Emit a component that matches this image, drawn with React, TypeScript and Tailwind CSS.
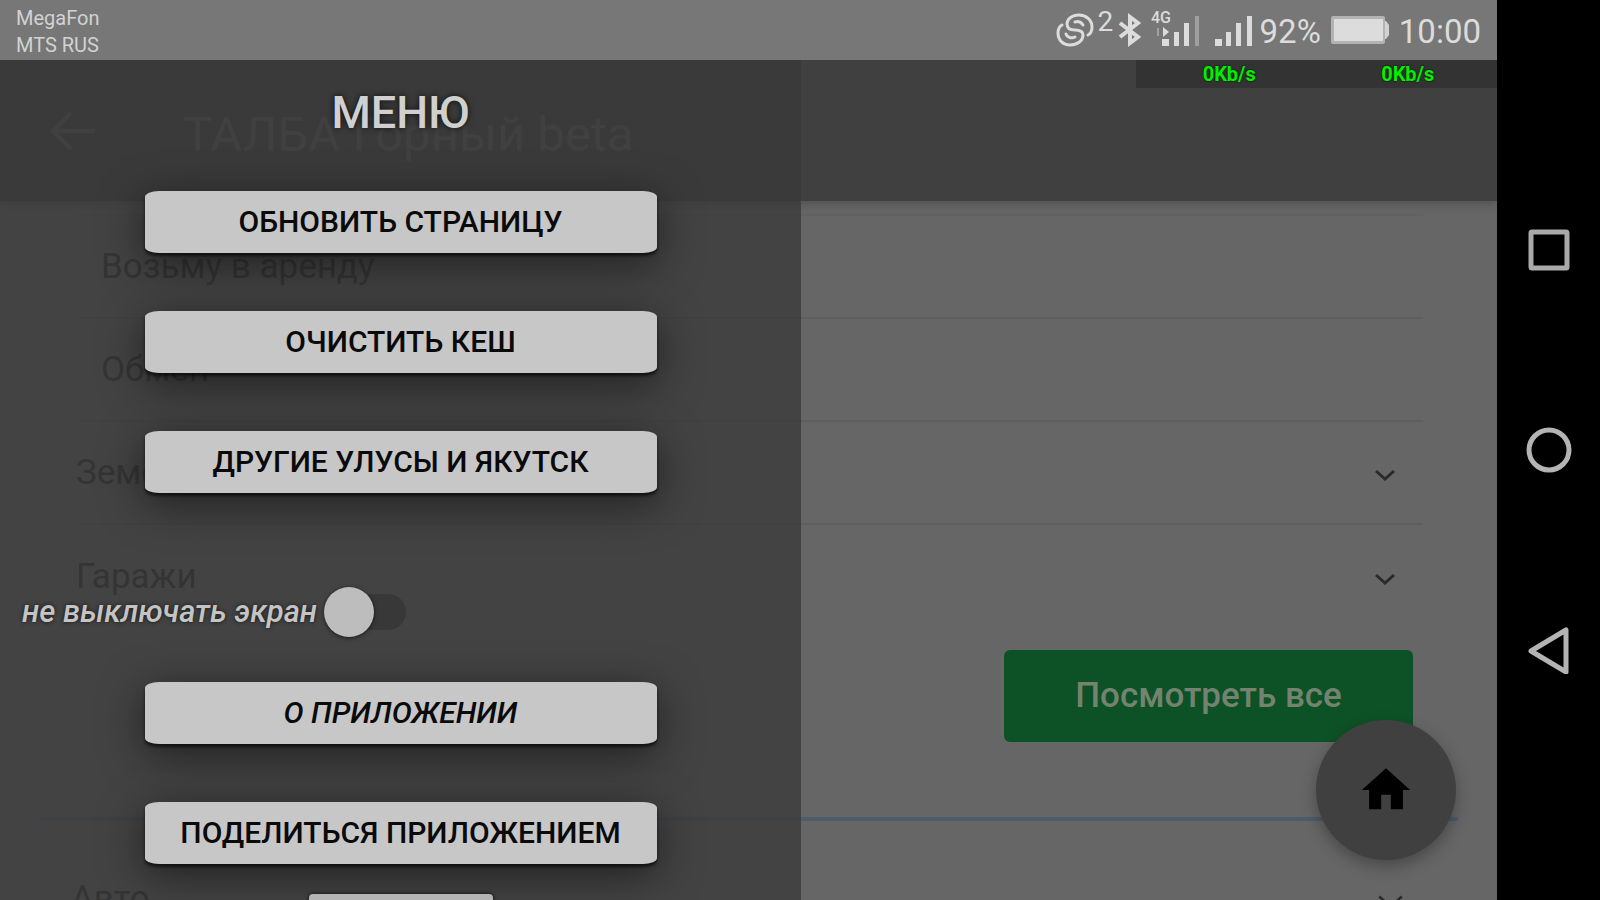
import React from 'react';

const Chevron: React.FC<{ size: 'sm' | 'lg' }> = ({ size }) => (
  <svg
    viewBox="0 0 20 18"
    className={size === 'sm' ? 'w-5 h-[18px]' : 'w-[25px] h-6'}
    fill="none"
    stroke="#2a2a2a"
    strokeWidth={size === 'sm' ? 3 : 2}
  >
    <path d="M1 7l9 8 9-8" />
  </svg>
);

const StatusBar: React.FC = () => (
  <div className="h-[60px] shrink-0 bg-[#777] text-[#dcdcdc] flex items-center justify-between px-4">
    <div className="pt-1 text-xl leading-[27px] text-[#d2d2d2]">
      <p>MegaFon</p>
      <p>MTS RUS</p>
    </div>

    <div className="flex items-center">
      <svg viewBox="0 0 38 34" className="w-[38px] h-[34px]" fill="none" stroke="currentColor" strokeWidth="3" strokeLinecap="round">
        <path d="M32 22c2-1 4-4 4-8C36 7 30 2 23 2c-7 0-12 4-12 9 0 4 3 6 8 6s8 1 8 5c0 6-6 10-13 10S2 27 2 20c0-4 2-7 4-8" />
        <path d="M27 12c-2-3-5-4-8-3" />
        <path d="M10 21c1 3 5 5 9 3" />
      </svg>
      <span className="text-[28px] leading-5 pb-4 ml-1 w-5">2</span>

      <svg viewBox="0 0 24 34" className="w-6 h-[34px] mr-[9px]" fill="none" stroke="currentColor" strokeWidth="4">
        <path d="M2 10l18 14-8 6V4l8 6L2 24" />
      </svg>

      <svg viewBox="0 0 48 44" className="w-12 h-11 mr-4" fill="currentColor">
        <text x="0" y="15" fontSize="16" fontWeight="500">4G</text>
        <path d="M12 19l6 5-6 5z" />
        <path d="M6 20h2v8H6z" opacity="0.4" />
        <rect x="11" y="31" width="7" height="7" />
        <rect x="23" y="24" width="5" height="14" />
        <rect x="33" y="15" width="5" height="23" />
        <rect x="44" y="8" width="4" height="30" opacity="0.4" />
      </svg>

      <svg viewBox="0 0 37 44" className="w-[37px] h-11 mr-2" fill="currentColor">
        <rect x="0" y="31" width="7" height="7" />
        <rect x="11" y="24" width="5" height="14" />
        <rect x="21" y="15" width="5" height="23" />
        <rect x="32" y="8" width="5" height="30" />
      </svg>

      <span className="pt-1 text-[33px] leading-10 mr-2.5">92%</span>

      <svg viewBox="0 0 58 30" className="w-[58px] h-[30px] mr-2.5" fill="currentColor">
        <rect x="0" y="1" width="54" height="28" rx="2" opacity="0.6" />
        <rect x="3" y="4" width="49" height="22" />
        <path d="M54 6h1l3 4v10l-3 4h-1z" opacity="0.9" />
      </svg>

      <time className="pt-1 text-[33px] leading-10">10:00</time>
    </div>
  </div>
);

const Category: React.FC<{ title: string; nested?: boolean; last?: boolean }> = ({ title, nested, last }) => (
  <li>
    <button
      className={
        'w-full h-[103px] flex items-center justify-between pr-7 text-left text-[35px] leading-10 text-[#262626] border-[#5e5e5e] ' +
        (nested ? 'pl-[25px] ' : '') +
        (last ? '' : 'border-b-2')
      }
    >
      {title}
      {!nested && <Chevron size="sm" />}
    </button>
  </li>
);

const Page: React.FC = () => (
  <div className="h-full flex flex-col bg-[#666]">
    <header className="h-[141px] shrink-0 bg-[#404040] shadow-[0_2px_10px_rgba(0,0,0,0.25)] flex items-center pl-[50px] text-[#5a5a5a] z-0">
      <button aria-label="Назад">
        <svg viewBox="0 0 46 40" className="w-[46px] h-10" fill="none" stroke="currentColor" strokeWidth="4">
          <path d="M45 20H3M21 2L3 20l18 18" />
        </svg>
      </button>
      <h1 className="ml-[87px] pt-2 text-[49px]">ТАЛБА Горный beta</h1>
    </header>

    <ul className="mt-[13px] ml-[76px] mr-[74px] border-t-2 border-[#616161]">
      <Category title="Возьму в аренду" nested />
      <Category title="Обмен" nested />
      <Category title="Земельные участки" />
      <Category title="Гаражи" last />
    </ul>

    <div className="flex justify-end pr-[84px] mt-[22px]">
      <button className="w-[409px] h-[92px] rounded-md bg-[#0d5226] text-[#73836f] text-[35px] font-medium">
        Посмотреть все
      </button>
    </div>

    <hr className="mt-[75px] ml-10 mr-[39px] border-0 h-1 shrink-0 bg-[#4c5c69]" />

    <button className="mt-[58px] ml-[71px] mr-[94px] flex items-center justify-between text-[35px] leading-10 text-[#262626]">
      Авто
      <Chevron size="lg" />
    </button>
  </div>
);

const MenuButton: React.FC<{ children: React.ReactNode; italic?: boolean }> = ({ children, italic }) => (
  <button
    className={
      'w-[512px] h-[62px] shrink-0 rounded-[14px/6px] bg-[#c7c7c7] text-[#0a0a0a] text-3xl font-medium shadow-[0_3px_3px_rgba(0,0,0,0.6),0_10px_44px_rgba(0,0,0,0.55)] ' +
      (italic ? 'italic' : '')
    }
  >
    {children}
  </button>
);

const Drawer: React.FC = () => (
  <aside className="absolute left-0 top-0 h-full w-[801px] max-w-full overflow-hidden bg-[#393939]/76 flex flex-col items-center pt-[25px]">
    <h2 className="h-14 shrink-0 text-[45px] leading-[56px] font-medium text-[#d0d0d0] [text-shadow:0_0_6px_rgba(0,0,0,0.8)]">
      МЕНЮ
    </h2>

    <div className="mt-[50px] flex flex-col gap-[58px]">
      <MenuButton>ОБНОВИТЬ СТРАНИЦУ</MenuButton>
      <MenuButton>ОЧИСТИТЬ КЕШ</MenuButton>
      <MenuButton>ДРУГИЕ УЛУСЫ И ЯКУТСК</MenuButton>
    </div>

    <label className="mt-[94px] h-[50px] shrink-0 self-start pl-[22px] flex items-center gap-[7px] text-[31px] italic font-medium text-[#c4c4c4] [text-shadow:0_0_4px_rgba(0,0,0,0.7)]">
      не выключать экран
      <input
        type="checkbox"
        role="switch"
        className="appearance-none relative w-[82px] h-9 rounded-full bg-linear-to-r from-transparent from-30% to-[#383838] to-30% before:absolute before:left-0 before:-top-[7px] before:size-[50px] before:rounded-full before:bg-[#bdbdbd] before:shadow-[0_1px_4px_rgba(0,0,0,0.6)] checked:before:left-[32px]"
      />
    </label>

    <div className="mt-[45px] flex flex-col gap-[58px]">
      <MenuButton italic>О ПРИЛОЖЕНИИ</MenuButton>
      <MenuButton>ПОДЕЛИТЬСЯ ПРИЛОЖЕНИЕМ</MenuButton>
    </div>

    <button
      aria-label="Ещё"
      className="mt-[30px] w-[184px] h-[62px] shrink-0 rounded-sm bg-[#b4b4b4] shadow-[0_0_4px_rgba(0,0,0,0.8)]"
    />
  </aside>
);

const NavBar: React.FC = () => (
  <nav className="w-[103px] shrink-0 bg-black flex flex-col items-center justify-center">
    <button aria-label="Последние" className="h-[200px]">
      <svg viewBox="0 0 48 48" className="size-12" fill="none" stroke="#a9a9a9" strokeWidth="5">
        <rect x="6" y="6" width="36" height="36" rx="1" />
      </svg>
    </button>
    <button aria-label="Домой" className="h-[200px]">
      <svg viewBox="0 0 48 48" className="size-12" fill="none" stroke="#b4b4b4" strokeWidth="5">
        <circle cx="24" cy="24" r="20" />
      </svg>
    </button>
    <button aria-label="Назад" className="h-[200px]">
      <svg viewBox="0 0 48 48" className="size-12" fill="none" stroke="#b4b4b4" strokeWidth="5" strokeLinejoin="round">
        <path d="M41 4v42L6 25z" />
      </svg>
    </button>
  </nav>
);

export default function App() {
  return (
    <div className="h-screen flex overflow-hidden font-['Roboto',sans-serif]">
      <div className="flex-1 min-w-0 flex flex-col">
        <StatusBar />

        <main className="relative flex-1 min-h-0 overflow-hidden">
          <Page />

          <button
            aria-label="Главная"
            className="absolute right-[41px] bottom-10 size-[140px] rounded-full bg-[#404040] shadow-[0_6px_16px_rgba(0,0,0,0.3)] flex items-center justify-center"
          >
            <svg viewBox="0 0 24 24" className="size-[58px]" fill="#000">
              <path d="M10 20v-6h4v6h5v-8h3L12 3 2 12h3v8z" />
            </svg>
          </button>

          {/* network speed widget */}
          <div className="absolute right-0 top-0 w-[361px] h-7 bg-[#333] pl-1 grid grid-cols-2 text-center text-xl leading-7 font-bold text-[#00f000] [text-shadow:0_0_2px_#000]">
            <span>0Kb/s</span>
            <span>0Kb/s</span>
          </div>

          <Drawer />
        </main>
      </div>

      <NavBar />
    </div>
  );
}
